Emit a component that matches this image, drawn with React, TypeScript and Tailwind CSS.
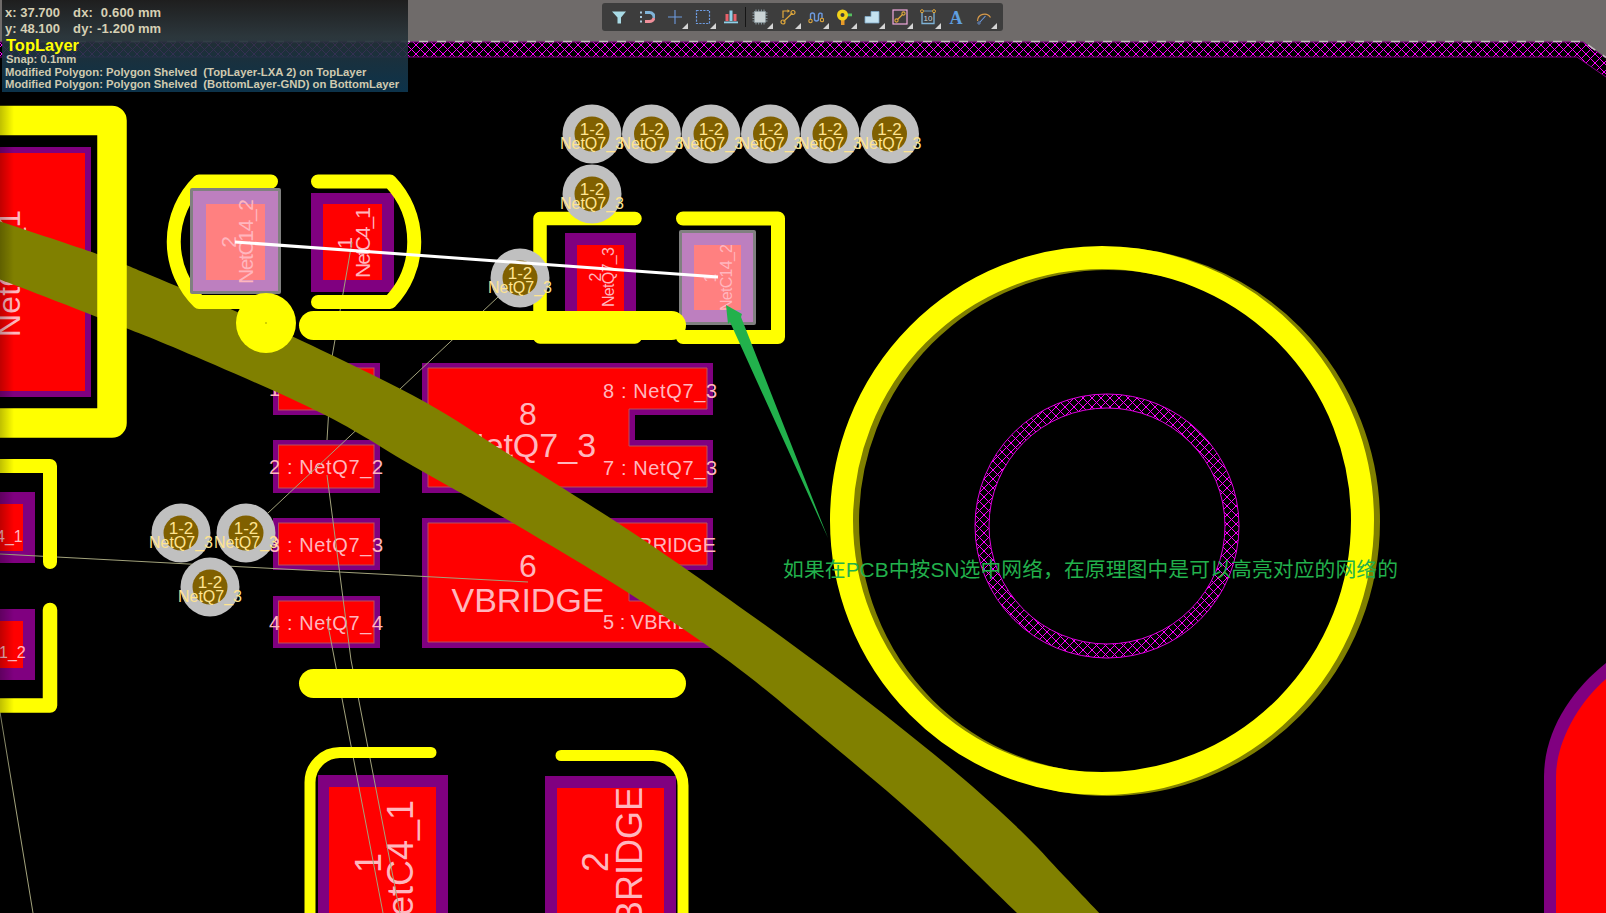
import type { ReactNode } from 'react';

/* ---------- Board data -------------------------------------------- */
const SANS = "font-['Liberation_Sans',sans-serif]";

const YELLOW = '#ffff00';
const PURPLE = '#800080';
const RED = '#ff0000';
const OLIVE = '#808000';
const LABEL = '#ffb6be';
const NET = '#a3a37c';

type Pt = [number, number];

const upperEdge: Pt[] = [
  [-20, 215], [97, 254], [150, 275], [235, 311], [321, 350], [425, 402], [513, 457], [627, 529],
  [730, 600], [845, 684], [953, 770], [1020, 830], [1065, 877], [1120, 935],
];
const lowerEdge: Pt[] = [
  [1040, 935], [1017, 913], [920, 820], [820, 735], [730, 662], [627, 592], [513, 523], [413, 466],
  [321, 413], [180, 350], [97, 317], [20, 287], [-20, 272],
];

// smooth line through measured points
function smooth(pts: Pt[]) {
  let d = '';
  for (let i = 0; i < pts.length - 1; i++) {
    const p0 = pts[Math.max(i - 1, 0)];
    const p1 = pts[i];
    const p2 = pts[i + 1];
    const p3 = pts[Math.min(i + 2, pts.length - 1)];
    const c1 = [p1[0] + (p2[0] - p0[0]) / 6, p1[1] + (p2[1] - p0[1]) / 6];
    const c2 = [p2[0] - (p3[0] - p1[0]) / 6, p2[1] - (p3[1] - p1[1]) / 6];
    d += `C${c1[0]} ${c1[1]} ${c2[0]} ${c2[1]} ${p2[0]} ${p2[1]}`;
  }
  return d;
}

const trackPath =
  `M${upperEdge[0][0]} ${upperEdge[0][1]}${smooth(upperEdge)}` +
  `L${lowerEdge[0][0]} ${lowerEdge[0][1]}${smooth(lowerEdge)}Z`;

const viaSpots: Pt[] = [
  [592, 134],
  [651.5, 134],
  [711, 134],
  [770.5, 134],
  [830, 134],
  [889.5, 134],
  [592, 194],
  [520, 278],
  [181, 533],
  [246, 533],
  [210, 587],
];

const netLines = [
  '498,297 268,513',
  '352,242 332,357 327,440',
  '327,475 351,660 400,913',
  '327,620 383,913',
  '0,554 528,582',
  '0,712 33,913',
];

/* ---------- Small drawing helpers --------------------------------- */
function Box({ x, y, x2, y2, fill }: { x: number; y: number; x2: number; y2: number; fill: string }) {
  return <rect x={x} y={y} width={x2 - x} height={y2 - y} fill={fill} />;
}

function SmallPad({ y, y2, label, base }: { y: number; y2: number; label: string; base: number }) {
  return (
    <>
      <Box x={273} y={y} x2={380} y2={y2} fill={PURPLE} />
      <rect x={278.5} y={y + 5} width={95.5} height={y2 - y - 10} fill={RED} stroke="#b8505c" strokeWidth={1} />
      <text x={269} y={base} fontSize={20} fill={LABEL} textLength={114}>
        {label}
      </text>
    </>
  );
}

function Upright({ x, y, size, children, len, anchor = 'start' }: {
  x: number;
  y: number;
  size: number;
  children: ReactNode;
  len?: number;
  anchor?: 'start' | 'middle' | 'end';
}) {
  return (
    <text
      transform={`translate(${x},${y}) rotate(-90)`}
      fontSize={size}
      fill={LABEL}
      textLength={len}
      textAnchor={anchor}
    >
      {children}
    </text>
  );
}

/* ---------- Toolbar icons ----------------------------------------- */
const toolIcons: { key: string; menu: boolean; icon: ReactNode }[] = [
  {
    key: 'filter',
    menu: false,
    icon: <path d="M1 2.5h14L10 8.5v6H6.5v-6z" fill="#a9dbe6" />,
  },
  {
    key: 'magnet',
    menu: false,
    icon: (
      <>
        <path d="M6 3.5h4.5a4.5 4.5 0 0 1 4.4 5.5" fill="none" stroke="#7fb4d8" strokeWidth="3" />
        <path d="M6 12.5h4.5a4.5 4.5 0 0 0 4.4-3.5" fill="none" stroke="#ef8f9a" strokeWidth="3" />
        <rect x="1" y="2.5" width="2" height="2" fill="#a9c9dc" />
        <rect x="1" y="7" width="2" height="2" fill="#a9c9dc" />
        <rect x="1" y="11.5" width="2" height="2" fill="#a9c9dc" />
      </>
    ),
  },
  {
    key: 'cross',
    menu: true,
    icon: <path d="M8 1v14M1 8h14" fill="none" stroke="#6d9be0" strokeWidth="1.1" />,
  },
  {
    key: 'area',
    menu: true,
    icon: <rect x="1.5" y="1.5" width="13" height="13" fill="none" stroke="#6d9be0" strokeWidth="1.2" strokeDasharray="2.2 1.2" />,
  },
  {
    key: 'align',
    menu: false,
    icon: (
      <>
        <rect x="2.5" y="5" width="3" height="7" fill="#e8606a" />
        <rect x="6.5" y="1.5" width="3" height="10.5" fill="#8fd0e8" />
        <rect x="10.5" y="5" width="3" height="7" fill="#e8606a" />
        <rect x="1" y="12.5" width="14" height="1.8" fill="#8fd0e8" />
      </>
    ),
  },
  {
    key: 'chip',
    menu: true,
    icon: (
      <>
        <path d="M0.5 4h15M0.5 6.7h15M0.5 9.4h15M0.5 12h15M4 0.5v15M6.7 0.5v15M9.4 0.5v15M12 0.5v15" stroke="#9fb4bb" strokeWidth="0.8" />
        <rect x="2.5" y="2.5" width="11" height="11" fill="#c9d2d4" stroke="#8e9da3" strokeWidth="0.6" />
      </>
    ),
  },
  {
    key: 'route',
    menu: true,
    icon: (
      <>
        <path d="M3 9V2h5" fill="none" stroke="#e0a83c" strokeWidth="1.2" />
        <path d="M7.5 0.3 10 2 7.5 3.7z" fill="#e0a83c" />
        <path d="M3.5 12.5 12.5 4" stroke="#e0a83c" strokeWidth="1.2" />
        <circle cx="3" cy="13" r="2" fill="none" stroke="#e0a83c" strokeWidth="1.2" />
        <circle cx="13" cy="3.5" r="2" fill="none" stroke="#e0a83c" strokeWidth="1.2" />
      </>
    ),
  },
  {
    key: 'tune',
    menu: true,
    icon: (
      <>
        <path d="M2.5 10V6a2 2 0 0 1 4 0v4a2 2 0 0 0 4 0V6a2 2 0 0 1 3.5-1.2V9" fill="none" stroke="#6d9be0" strokeWidth="1.4" />
        <circle cx="2.5" cy="12" r="1.7" fill="none" stroke="#e0a83c" strokeWidth="1.1" />
        <circle cx="14" cy="11" r="1.7" fill="none" stroke="#e0a83c" strokeWidth="1.1" />
      </>
    ),
  },
  {
    key: 'probe',
    menu: true,
    icon: (
      <>
        <rect x="5" y="10" width="3.5" height="6" fill="#e89a2a" />
        <rect x="10.5" y="4.5" width="5.5" height="2.8" fill="#55c060" />
        <circle cx="6.5" cy="6" r="5.5" fill="#f2d21a" />
        <circle cx="6.5" cy="6" r="2" fill="#3c3c3c" />
      </>
    ),
  },
  {
    key: 'steps',
    menu: true,
    icon: <path d="M1 14V7.5h6V2.5h8V14z" fill="#c4e2f0" stroke="#7fa9c8" strokeWidth="0.8" />,
  },
  {
    key: 'track',
    menu: true,
    icon: (
      <>
        <rect x="1" y="1" width="14" height="14" fill="none" stroke="#f0a8dc" strokeWidth="1.2" />
        <path d="M5.5 10.5 10.5 5.5" stroke="#e0a83c" strokeWidth="1.2" />
        <circle cx="4.5" cy="11.5" r="1.6" fill="none" stroke="#e0a83c" strokeWidth="1.1" />
        <circle cx="11.5" cy="4.5" r="1.6" fill="none" stroke="#e0a83c" strokeWidth="1.1" />
      </>
    ),
  },
  {
    key: 'dimension',
    menu: true,
    icon: (
      <>
        <path d="M2 3v11.5h12V3" fill="none" stroke="#7fb4d8" strokeWidth="1.3" />
        <path d="M4 2h8" stroke="#7fb4d8" strokeWidth="0.8" />
        <circle cx="2" cy="2.2" r="1.5" fill="none" stroke="#e0a83c" strokeWidth="1" />
        <circle cx="14" cy="2.2" r="1.5" fill="none" stroke="#e0a83c" strokeWidth="1" />
        <text x="8" y="11.5" fontSize="8" textAnchor="middle" fill="#c8d4da" className={SANS}>
          10
        </text>
      </>
    ),
  },
  {
    key: 'text',
    menu: false,
    icon: (
      <text x="8" y="15" fontSize="18" fontWeight="bold" textAnchor="middle" fill="#5f9fe0" className="font-['Liberation_Serif',serif]">
        A
      </text>
    ),
  },
  {
    key: 'arc',
    menu: true,
    icon: (
      <>
        <path d="M1.5 12A7 7 0 0 1 14.5 8.5" fill="none" stroke="#d89a4a" strokeWidth="1.2" />
        <path d="M4 13 9.5 7" stroke="#6d9be0" strokeWidth="1.1" />
        <circle cx="3" cy="14" r="1.2" fill="none" stroke="#6d9be0" strokeWidth="0.8" />
      </>
    ),
  },
];

function Toolbar() {
  return (
    <div className="absolute left-[602px] top-[3px] flex h-[28px] w-[401px] rounded-[3px] bg-[#3d3d3d] pl-[3px]">
      {toolIcons.map((tool, i) => (
        <div key={tool.key} className="flex">
          {i === 5 && <div className="my-[4px] w-px bg-[#151515]" />}
          <div className="relative flex h-[28px] w-[28px] items-center justify-center">
            <svg width="16" height="16" viewBox="0 0 16 16">
              {tool.icon}
            </svg>
            {tool.menu && (
              <svg className="absolute bottom-[2px] right-[1px]" width="6" height="6" viewBox="0 0 6 6">
                <path d="M6 0v6H0z" fill="#d4d4d4" />
              </svg>
            )}
          </div>
        </div>
      ))}
    </div>
  );
}

/* ---------- Status overlay ---------------------------------------- */
function Readout({ axis, value, delta, amount }: { axis: string; value: string; delta: string; amount: string }) {
  return (
    <div className="flex h-[16px] items-center text-[13px] font-bold leading-[16px] text-[#d6d0b4]">
      <span className="w-[68px] whitespace-pre">
        {axis}: {value}
      </span>
      <span className="w-[65px] whitespace-pre tracking-[0.2px]">
        {delta}: {amount}
      </span>
      <span>mm</span>
    </div>
  );
}

function StatusPanel() {
  return (
    <div
      className={`absolute left-[2px] top-0 h-[92px] w-[406px] bg-[linear-gradient(180deg,rgba(28,28,28,0.97),rgba(38,50,56,0.92)_40%,rgba(14,58,85,0.88))] pl-[3px] pt-[5px] ${SANS}`}
    >
      <Readout axis="x" value="37.700" delta="dx" amount=" 0.600" />
      <Readout axis="y" value="48.100" delta="dy" amount="-1.200" />
      <div className="ml-[1px] h-[16px] text-[16.5px] font-bold leading-[16px] text-[#ffff00]">TopLayer</div>
      <div className="ml-[1px] text-[11.3px] font-bold leading-[12.5px] text-[#cfcab0]">Snap: 0.1mm</div>
      <div className="whitespace-pre text-[11.3px] font-bold leading-[12.5px] text-[#cfcab0]">
        Modified Polygon: Polygon Shelved  (TopLayer-LXA 2) on TopLayer
      </div>
      <div className="whitespace-pre text-[11.3px] font-bold leading-[12.5px] text-[#cfcab0]">
        Modified Polygon: Polygon Shelved  (BottomLayer-GND) on BottomLayer
      </div>
    </div>
  );
}

/* ---------- Board canvas ------------------------------------------ */
function Board() {
  return (
    <svg width="1606" height="913" viewBox="0 0 1606 913" className={`block ${SANS}`}>
      <defs>
        <pattern id="hatchEdge" width="9" height="9" patternUnits="userSpaceOnUse" x="2" y="45">
          <path d="M0 0 9 9M9 0 0 9" stroke="#ff00ff" strokeWidth="1.2" shapeRendering="crispEdges" />
        </pattern>
        <pattern id="hatchRing" width="9" height="9" patternUnits="userSpaceOnUse" x="3" y="2">
          <path d="M0 0 9 9M9 0 0 9" stroke="#ff00ff" strokeWidth="1.2" shapeRendering="crispEdges" />
        </pattern>
      </defs>

      {/* board edge + workspace */}
      <polygon points="0,0 1606,0 1606,58 1583,42 0,42" fill="#6f6b6a" />
      <polygon points="0,42 1583,42 1606,58 1606,77 1577,57 0,57" fill="url(#hatchEdge)" />
      <polyline points="0,57 1577,57 1606,77" fill="none" stroke={PURPLE} strokeWidth="1" />
      <polyline points="0,42 1583,42 1606,58" fill="none" stroke={PURPLE} strokeWidth="1" />
      <polyline points="5,41.5 1583,41.5 1606,57.5" fill="none" stroke="#c4c0c0" strokeWidth="1.5" strokeDasharray="9 9" />

      {/* pads */}
      <Box x={-5} y={147} x2={91} y2={397} fill={PURPLE} />
      <Box x={-5} y={153} x2={85} y2={391} fill={RED} />
      <Upright x={20} y={337} size={32} len={127}>
        NetC1_1
      </Upright>

      <Box x={-5} y={492} x2={35} y2={563} fill={PURPLE} />
      <Box x={-5} y={504} x2={23} y2={551} fill={RED} />
      <text x={-4} y={542} fontSize={16} fill={LABEL}>
        4_1
      </text>
      <Box x={-5} y={609} x2={35} y2={680} fill={PURPLE} />
      <Box x={-5} y={621} x2={23} y2={668} fill={RED} />
      <text x={-1} y={658} fontSize={16} fill={LABEL}>
        1_2
      </text>

      <Box x={311} y={193} x2={394} y2={292} fill={PURPLE} />
      <Box x={323} y={204} x2={382} y2={280} fill={RED} />
      <Upright x={352} y={243} size={21} anchor="middle">
        1
      </Upright>
      <Upright x={370} y={278} size={21} len={71}>
        NetC4_1
      </Upright>

      <Box x={565} y={233} x2={636} y2={320} fill={PURPLE} />
      <Box x={577} y={245} x2={624} y2={320} fill={RED} />
      <Upright x={601} y={277} size={16} anchor="middle">
        2
      </Upright>
      <Upright x={614} y={307} size={16} len={60}>
        NetQ7_3
      </Upright>

      <SmallPad y={363} y2={415} label="1 : NetQ7_1" base={396} />
      <SmallPad y={440} y2={493} label="2 : NetQ7_2" base={474} />
      <SmallPad y={518} y2={570} label="3 : NetQ7_3" base={552} />
      <SmallPad y={596} y2={648} label="4 : NetQ7_4" base={630} />

      <polygon points="422,363 713,363 713,415 635,415 635,440 713,440 713,493 422,493" fill={PURPLE} />
      <polygon points="428,368 707,368 707,409 629,409 629,446 707,446 707,487 428,487" fill={RED} stroke="#b8505c" strokeWidth="1" />
      <text x={528} y={425} fontSize={32} fill={LABEL} textAnchor="middle">
        8
      </text>
      <text x={528} y={457} fontSize={34} fill={LABEL} textAnchor="middle">
        NetQ7_3
      </text>
      <text x={603} y={398} fontSize={20} fill={LABEL} textLength={114}>
        8 : NetQ7_3
      </text>
      <text x={603} y={475} fontSize={20} fill={LABEL} textLength={114}>
        7 : NetQ7_3
      </text>

      <polygon points="422,518 713,518 713,570 635,570 635,596 713,596 713,648 422,648" fill={PURPLE} />
      <polygon points="428,523 707,523 707,565 629,565 629,601 707,601 707,642 428,642" fill={RED} stroke="#b8505c" strokeWidth="1" />
      <text x={528} y={577} fontSize={32} fill={LABEL} textAnchor="middle">
        6
      </text>
      <text x={528} y={612} fontSize={34} fill={LABEL} textAnchor="middle">
        VBRIDGE
      </text>
      <text x={716} y={552} fontSize={20} fill={LABEL} textAnchor="end">
        6 : VBRIDGE
      </text>
      <text x={603} y={629} fontSize={20} fill={LABEL}>
        5 : VBRIDGE
      </text>

      <Box x={318} y={775} x2={448} y2={920} fill={PURPLE} />
      <Box x={329} y={787} x2={436} y2={920} fill={RED} />
      <Upright x={381} y={863} size={36} anchor="middle">
        1
      </Upright>
      <Upright x={413} y={800} size={36} anchor="end">
        NetC4_1
      </Upright>
      <Box x={545} y={776} x2={676} y2={920} fill={PURPLE} />
      <Box x={557} y={788} x2={664} y2={920} fill={RED} />
      <Upright x={608} y={862} size={36} anchor="middle">
        2
      </Upright>
      <Upright x={642} y={787} size={36} anchor="end">
        VBRIDGE
      </Upright>

      <path d="M1544 913V777C1544 730 1572 690 1606 663V913z" fill={PURPLE} />
      <path d="M1556 913V777C1556 742 1578 703 1606 679V913z" fill={RED} />

      {/* ratsnest */}
      {netLines.map((points) => (
        <polyline key={points} points={points} fill="none" stroke={NET} strokeWidth="1" />
      ))}

      {/* bottom layer track */}
      <path d={trackPath} fill={OLIVE} />

      {/* silkscreen */}
      <g fill="none" stroke={YELLOW} strokeLinecap="round" strokeLinejoin="round">
        <path d="M-20 120.5H112V423H-20" strokeWidth="29.5" />
        <path d="M-10 466H50V562" strokeWidth="14" />
        <path d="M50 610V705.5H-10" strokeWidth="14.5" />
        <path d="M271 181.5H199A84.5 84.5 0 0 0 199 302H268" strokeWidth="14" />
        <path d="M318 181.5H390A87 87 0 0 1 390 302H318" strokeWidth="14" />
        <path d="M635 218.5H540V337H635" strokeWidth="13.5" />
        <path d="M683 218.5H778V337H683" strokeWidth="14" />
        <path d="M431 752.5H340A30 30 0 0 0 310 782.5V925" strokeWidth="11" />
        <path d="M561 755.5H653A30 30 0 0 1 683 785.5V925" strokeWidth="11" />
      </g>
      <ellipse cx="1108" cy="521.5" rx="260.5" ry="263" fill="none" stroke={OLIVE} strokeWidth="23" />
      <ellipse cx="1102" cy="520.5" rx="260.5" ry="263" fill="none" stroke={YELLOW} strokeWidth="23" />

      {/* keepout ring */}
      <circle cx="1107" cy="526" r="125" fill="none" stroke="url(#hatchRing)" strokeWidth="14" />
      <circle cx="1107" cy="526" r="132" fill="none" stroke="#e000e0" strokeWidth="1" />
      <circle cx="1107" cy="526" r="118" fill="none" stroke="#e000e0" strokeWidth="1" />

      {/* highlighted pads */}
      <rect x="190" y="188" width="91" height="106" rx="2" fill="#808080" />
      <rect x="193" y="191" width="85" height="100" fill="#bd7fbf" />
      <rect x="206" y="204" width="59" height="76" fill="#ff8080" />
      <Upright x={236} y={242} size={21} anchor="middle">
        2
      </Upright>
      <Upright x={253} y={284} size={21} len={85}>
        NetC14_2
      </Upright>
      <rect x="679" y="230" width="77" height="95" rx="2" fill="#808080" />
      <rect x="682" y="233" width="71" height="89" fill="#bd7fbf" />
      <rect x="694" y="245" width="47" height="65" fill="#ff8080" />
      <Upright x={716} y={278} size={16} anchor="middle">
        1
      </Upright>
      <Upright x={732} y={311} size={16} len={67}>
        NetC14_2
      </Upright>

      <rect x="299" y="311" width="387" height="29" rx="14.5" fill={YELLOW} />
      <rect x="299" y="669" width="387" height="29" rx="14.5" fill={YELLOW} />
      <circle cx="266" cy="323" r="30" fill={YELLOW} />
      <circle cx="266" cy="323" r="0.7" fill="#808000" />

      {/* vias */}
      {viaSpots.map(([cx, cy]) => (
        <g key={`${cx}-${cy}`}>
          <circle cx={cx} cy={cy} r="29.5" fill="#c0c0c0" />
          <circle cx={cx} cy={cy} r="17.5" fill="#806000" />
        </g>
      ))}
      {viaSpots.map(([cx, cy]) => (
        <g key={`${cx}-${cy}`} fill="#ffe490" textAnchor="middle">
          <text x={cx} y={cy + 1} fontSize={17}>
            1-2
          </text>
          <text x={cx} y={cy + 15} fontSize={16}>
            NetQ7_3
          </text>
        </g>
      ))}

      {/* selected connection + annotation */}
      <line x1="235" y1="242" x2="718" y2="277" stroke="#ffffff" strokeWidth="3" />
      <polygon points="726,305 742,314 741,317 828,538 730,322 728,324" fill="#22b14c" />
      <text
        x={783}
        y={577}
        fontSize={20.8}
        fill="#22b14c"
        textLength={615}
        className="font-['Liberation_Sans','Noto_Sans_CJK_SC',sans-serif]"
      >
        如果在PCB中按SN选中网络，在原理图中是可以高亮对应的网络的
      </text>
    </svg>
  );
}

/* ---------- Page -------------------------------------------------- */
export default function App() {
  return (
    <main className="relative h-[913px] w-[1606px] overflow-hidden bg-black">
      <Board />
      <div className="absolute bottom-0 left-0 top-[92px] w-[14px] bg-gradient-to-r from-black/25 to-transparent" />
      <StatusPanel />
      <Toolbar />
    </main>
  );
}
